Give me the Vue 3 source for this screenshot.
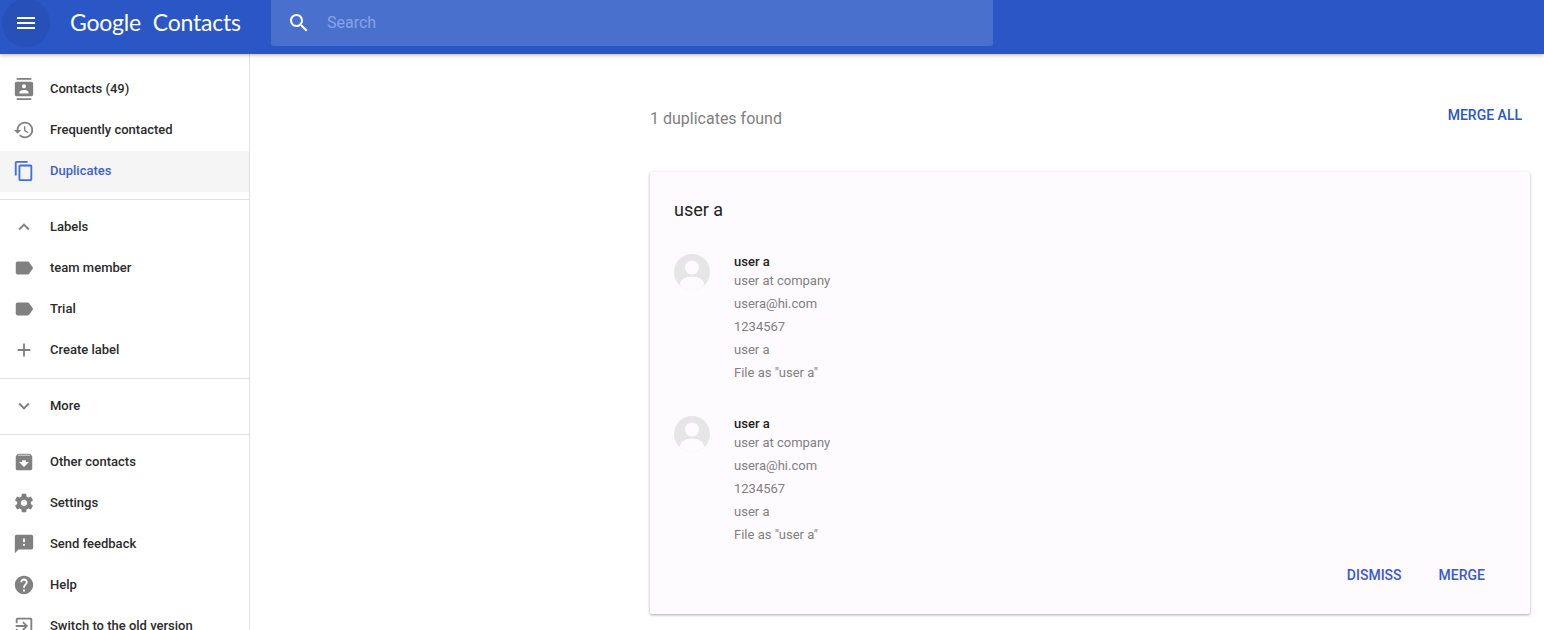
<script setup>
const icons = {
  contacts: 'M20 0H4v2h16V0zM4 24h16v-2H4v2zM20 4H4c-1.1 0-2 .9-2 2v12c0 1.1.9 2 2 2h16c1.1 0 2-.9 2-2V6c0-1.1-.9-2-2-2zm-8 2.75c1.24 0 2.25 1.01 2.25 2.25s-1.01 2.25-2.25 2.25S9.75 10.24 9.75 9 10.76 6.75 12 6.75zM17 17H7v-1.5c0-1.67 3.33-2.5 5-2.5s5 .83 5 2.5V17z',
  history: 'M13 3c-4.97 0-9 4.03-9 9H1l3.89 3.89.07.14L9 12H6c0-3.87 3.13-7 7-7s7 3.13 7 7-3.13 7-7 7c-1.93 0-3.68-.79-4.94-2.06l-1.42 1.42C8.27 19.99 10.51 21 13 21c4.97 0 9-4.03 9-9s-4.03-9-9-9zm-1 5v5l4.28 2.54.72-1.21-3.5-2.08V8H12z',
  copy: 'M16 1H4c-1.1 0-2 .9-2 2v14h2V3h12V1zm3 4H8c-1.1 0-2 .9-2 2v14c0 1.1.9 2 2 2h11c1.1 0 2-.9 2-2V7c0-1.1-.9-2-2-2zm0 16H8V7h11v14z',
  up: 'M12 8l-6 6 1.41 1.41L12 10.83l4.59 4.58L18 14z',
  down: 'M16.59 8.59L12 13.17 7.41 8.59 6 10l6 6 6-6z',
  label: 'M17.63 5.84C17.27 5.33 16.67 5 16 5L5 5.01C3.9 5.01 3 5.9 3 7v10c0 1.1.9 1.99 2 1.99L16 19c.67 0 1.27-.33 1.63-.84L22 12l-4.37-6.16z',
  plus: 'M19 13h-6v6h-2v-6H5v-2h6V5h2v6h6v2z',
  archive: 'M20.54 5.23l-1.39-1.68C18.88 3.21 18.47 3 18 3H6c-.47 0-.88.21-1.16.55L3.46 5.23C3.17 5.57 3 6.02 3 6.5V19c0 1.1.9 2 2 2h14c1.1 0 2-.9 2-2V6.5c0-.48-.17-.93-.46-1.27zM12 17.5L6.5 12H10v-2h4v2h3.5L12 17.5zM5.12 5l.81-1h12l.94 1H5.12z',
  gear: 'M19.43 12.98c.04-.32.07-.64.07-.98s-.03-.66-.07-.98l2.11-1.65c.19-.15.24-.42.12-.64l-2-3.46c-.12-.22-.39-.3-.61-.22l-2.49 1c-.52-.4-1.08-.73-1.69-.98l-.38-2.65C14.46 2.18 14.25 2 14 2h-4c-.25 0-.46.18-.49.42l-.38 2.65c-.61.25-1.17.59-1.69.98l-2.49-1c-.23-.09-.49 0-.61.22l-2 3.46c-.13.22-.07.49.12.64l2.11 1.65c-.04.32-.07.65-.07.98s.03.66.07.98l-2.11 1.65c-.19.15-.24.42-.12.64l2 3.46c.12.22.39.3.61.22l2.49-1c.52.4 1.08.73 1.69.98l.38 2.65c.03.24.24.42.49.42h4c.25 0 .46-.18.49-.42l.38-2.65c.61-.25 1.17-.59 1.69-.98l2.49 1c.23.09.49 0 .61-.22l2-3.46c.12-.22.07-.49-.12-.64l-2.11-1.65zM12 15.5c-1.93 0-3.5-1.57-3.5-3.5s1.57-3.5 3.5-3.5 3.5 1.57 3.5 3.5-1.57 3.5-3.5 3.5z',
  feedback: 'M20 2H4c-1.1 0-1.99.9-1.99 2L2 22l4-4h14c1.1 0 2-.9 2-2V4c0-1.1-.9-2-2-2zm-7 12h-2v-2h2v2zm0-4h-2V6h2v4z',
  help: 'M12 2C6.48 2 2 6.48 2 12s4.48 10 10 10 10-4.48 10-10S17.52 2 12 2zm1 17h-2v-2h2v2zm2.07-7.75l-.9.92C13.45 12.9 13 13.5 13 15h-2v-.5c0-1.1.45-2.1 1.17-2.83l1.24-1.26c.37-.36.59-.86.59-1.41 0-1.1-.9-2-2-2s-2 .9-2 2H8c0-2.21 1.79-4 4-4s4 1.79 4 4c0 .88-.36 1.68-.93 2.25z',
  exit: 'M10.09 15.59L11.5 17l5-5-5-5-1.41 1.41L12.67 11H3v2h9.67l-2.58 2.59zM19 3H5c-1.11 0-2 .9-2 2v4h2V5h14v14H5v-4H3v4c0 1.1.89 2 2 2h14c1.1 0 2-.9 2-2V5c0-1.1-.9-2-2-2z'
}
const top = [
  { icon: 'contacts', text: 'Contacts (49)' },
  { icon: 'history', text: 'Frequently contacted' },
  { icon: 'copy', text: 'Duplicates', active: true }
]
const labels = [
  { icon: 'up', text: 'Labels' },
  { icon: 'label', text: 'team member' },
  { icon: 'label', text: 'Trial' },
  { icon: 'plus', text: 'Create label' }
]
const more = [{ icon: 'down', text: 'More' }]
const bottom = [
  { icon: 'archive', text: 'Other contacts' },
  { icon: 'gear', text: 'Settings' },
  { icon: 'feedback', text: 'Send feedback' },
  { icon: 'help', text: 'Help' },
  { icon: 'exit', text: 'Switch to the old version' }
]
const groups = [top, labels, more, bottom]
const lines = ['user at company', 'usera@hi.com', '1234567', 'user a', 'File as "user a"']
</script>

<template>
  <div class="page">
    <header class="bar">
      <button class="menu" aria-label="Main menu">
        <svg width="24" height="24" viewBox="0 0 24 24"><path fill="#fff" d="M3 18h18v-2H3v2zm0-5h18v-2H3v2zm0-7v2h18V6H3z" /></svg>
      </button>
      <div class="logo">Google Contacts</div>
      <div class="search">
        <svg width="24" height="24" viewBox="0 0 24 24"><path fill="#fff" d="M15.5 14h-.79l-.28-.27C15.41 12.59 16 11.11 16 9.5 16 5.91 13.09 3 9.5 3S3 5.91 3 9.5 5.91 16 9.5 16c1.61 0 3.09-.59 4.23-1.57l.27.28v.79l5 4.99L20.49 19l-4.99-5zm-6 0C7.01 14 5 11.99 5 9.5S7.01 5 9.5 5 14 7.01 14 9.5 11.99 14 9.5 14z" /></svg>
        <span class="placeholder">Search</span>
      </div>
    </header>
    <div class="body">
      <nav class="side">
        <div v-for="(group, g) in groups" :key="g" class="group">
          <div v-for="item in group" :key="item.text" class="item" :class="{ active: item.active }">
            <svg class="ico" width="22" height="22" viewBox="0 0 24 24"><path :d="icons[item.icon]" /></svg>
            <span>{{ item.text }}</span>
          </div>
        </div>
      </nav>
      <main class="main">
        <div class="head">
          <span class="found">1 duplicates found</span>
          <span class="merge-all">MERGE ALL</span>
        </div>
        <section class="card">
          <h2 class="title">user a</h2>
          <div v-for="n in 2" :key="n" class="contact">
            <svg class="avatar" width="36" height="36" viewBox="0 0 36 36">
              <defs><clipPath :id="'av' + n"><circle cx="18" cy="18" r="18" /></clipPath></defs>
              <circle cx="18" cy="18" r="18" fill="#e6e6e6" />
              <g :clip-path="'url(#av' + n + ')'" fill="#fdfbfd">
                <circle cx="18" cy="13.5" r="7" />
                <ellipse cx="18" cy="30" rx="12" ry="7.5" />
              </g>
            </svg>
            <div class="info">
              <div class="name">user a</div>
              <div v-for="line in lines" :key="line" class="line">{{ line }}</div>
            </div>
          </div>
          <div class="actions">
            <span class="act">DISMISS</span>
            <span class="act">MERGE</span>
          </div>
        </section>
      </main>
    </div>
  </div>
</template>

<style>
html, body { margin: 0; overflow: hidden; background: #fff; }
</style>

<style scoped>
.page {
  width: 1544px;
  height: 630px;
  overflow: hidden;
  display: flex;
  flex-direction: column;
  font-family: Roboto, "Liberation Sans", sans-serif;
  color: #212121;
}
.bar {
  height: 54px;
  flex: none;
  background: #2a56c6;
  display: flex;
  align-items: center;
  box-shadow: 0 1px 4px rgba(0, 0, 0, .3);
  position: relative;
  z-index: 2;
}
.menu {
  width: 48px;
  height: 48px;
  margin-left: 2px;
  padding: 0;
  border: 0;
  border-radius: 50%;
  background: #2850b9;
  display: flex;
  align-items: center;
  justify-content: center;
  align-self: flex-start;
  margin-top: -1px;
}
.logo {
  margin-left: 20px;
  width: 201px;
  padding-bottom: 10px;
  font-family: Lato, "Open Sans", sans-serif;
  font-size: 23px;
  letter-spacing: -.2px;
  word-spacing: 6px;
  color: #fff;
  white-space: nowrap;
}
.search {
  width: 722px;
  height: 46px;
  align-self: flex-start;
  background: #4a70ce;
  border-radius: 0 0 3px 3px;
  display: flex;
  align-items: center;
  padding: 0 0 1px 16px;
  box-sizing: border-box;
}
.placeholder {
  margin-left: 16px;
  font-size: 16px;
  color: #8ba2e0;
}
.body {
  flex: 1;
  display: flex;
  min-height: 0;
}
.side {
  width: 250px;
  flex: none;
  box-sizing: border-box;
  border-right: 1px solid #e0e0e0;
  padding-top: 15px;
  overflow: hidden;
}
.group {
  padding-bottom: 7px;
  margin-bottom: 7px;
  border-bottom: 1px solid #e3e3e3;
}
.group:last-child { border-bottom: 0; }
.item {
  height: 41px;
  box-sizing: border-box;
  padding: 0 0 2px 13px;
  display: flex;
  align-items: center;
  font-size: 13px;
  font-weight: 500;
  color: #2b2b2b;
}
.ico {
  fill: #808080;
  flex: none;
  margin-right: 15px;
}
.item.active {
  background: #f5f5f5;
  color: #3f62c9;
}
.item.active .ico { fill: #3f6fd8; }
.main {
  flex: 1;
  padding-left: 400px;
  padding-right: 14px;
}
.head {
  display: flex;
  justify-content: space-between;
  padding-top: 54px;
  height: 118px;
  box-sizing: border-box;
}
.found {
  font-size: 16px;
  line-height: 20px;
  padding-top: 1px;
  color: #808080;
}
.merge-all {
  font-size: 14px;
  font-weight: 500;
  line-height: 14px;
  margin-right: 8px;
  color: #2a56c6;
}
.card {
  height: 442px;
  box-sizing: border-box;
  background: #fefbfe;
  border-radius: 2px;
  box-shadow: 0 1px 3px rgba(0, 0, 0, .35);
  padding: 27px 24px 0;
  position: relative;
}
.title {
  margin: 0 0 26px;
  font-size: 18px;
  font-weight: 400;
  line-height: 21px;
  color: #212121;
}
.contact {
  display: flex;
  height: 162px;
}
.avatar { flex: none; margin: 8px 24px 0 0; }
.info { padding-top: 8px; }
.name {
  font-size: 13px;
  font-weight: 500;
  line-height: 15px;
  color: #212121;
}
.line {
  font-size: 13px;
  line-height: 23px;
  color: #808080;
}
.actions {
  display: flex;
  justify-content: flex-end;
  gap: 37px;
  margin: -3px 21px 0 0;
}
.act {
  font-size: 14px;
  font-weight: 500;
  line-height: 16px;
  color: #3b57cf;
}
</style>
